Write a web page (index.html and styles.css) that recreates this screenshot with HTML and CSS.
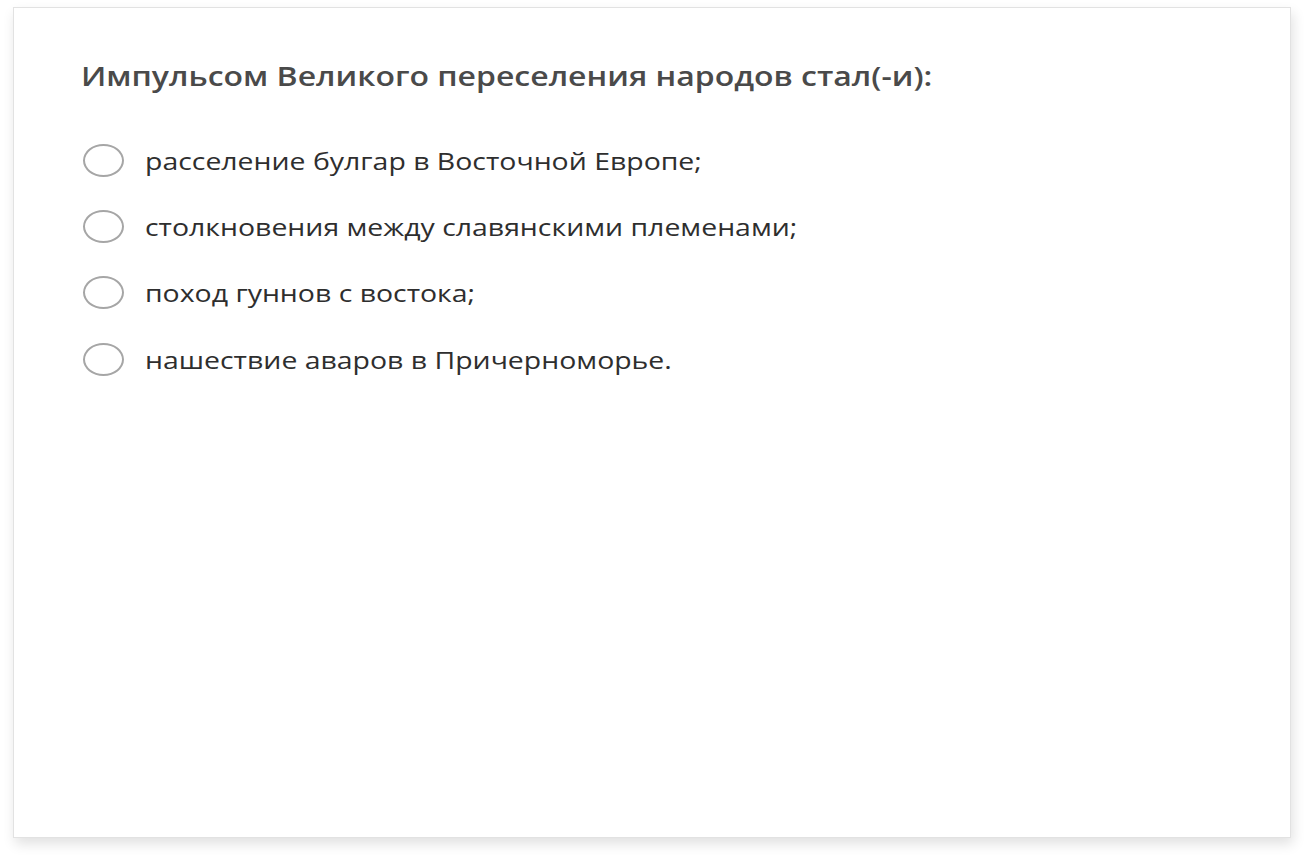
FILE: index.html
```html
<!DOCTYPE html>
<html lang="ru">
<head>
<meta charset="utf-8">
<link rel="stylesheet" href="styles.css">
</head>
<body>
<div class="card">
  <h1 class="question"><span class="stretch">Импульсом Великого переселения народов стал(-и):</span></h1>
  <ul class="options">
    <li class="option"><span class="radio"></span><span class="label stretch">расселение булгар в Восточной Европе;</span></li>
    <li class="option"><span class="radio"></span><span class="label stretch">столкновения между славянскими племенами;</span></li>
    <li class="option"><span class="radio"></span><span class="label stretch">поход гуннов с востока;</span></li>
    <li class="option"><span class="radio"></span><span class="label stretch">нашествие аваров в Причерноморье.</span></li>
  </ul>
</div>
</body>
</html>
```
FILE: styles.css
```css
html, body {
  margin: 0;
  padding: 0;
  background: #ffffff;
}
body {
  padding: 7px 13px 0 13px;
  width: 1304px;
  height: 857px;
  box-sizing: border-box;
  font-family: "Open Sans", "Liberation Sans", sans-serif;
}
.card {
  width: 1278px;
  height: 831px;
  box-sizing: border-box;
  border: 1px solid #e2e2e2;
  background: #fff;
  box-shadow: 2px 6px 12px rgba(0,0,0,0.12);
  padding: 49px 0 0 67px;
}
.stretch {
  display: inline-block;
  transform: scaleX(1.184);
  transform-origin: left center;
}
.question {
  margin: 0;
  font-size: 27px;
  font-weight: 600;
  color: #4a4a4a;
  line-height: 38px;
}
.options {
  list-style: none;
  margin: 32px 0 0 0;
  padding: 0;
  display: flex;
  flex-direction: column;
}
.option {
  display: flex;
  align-items: center;
  height: 66.4px;
}
.radio {
  width: 37px;
  height: 29px;
  border: 2.5px solid #a6a6a6;
  border-radius: 50%;
  margin-left: 2px;
  margin-right: 21px;
  flex: none;
}
.label {
  font-size: 24px;
  color: #2e2e2e;
}
```
